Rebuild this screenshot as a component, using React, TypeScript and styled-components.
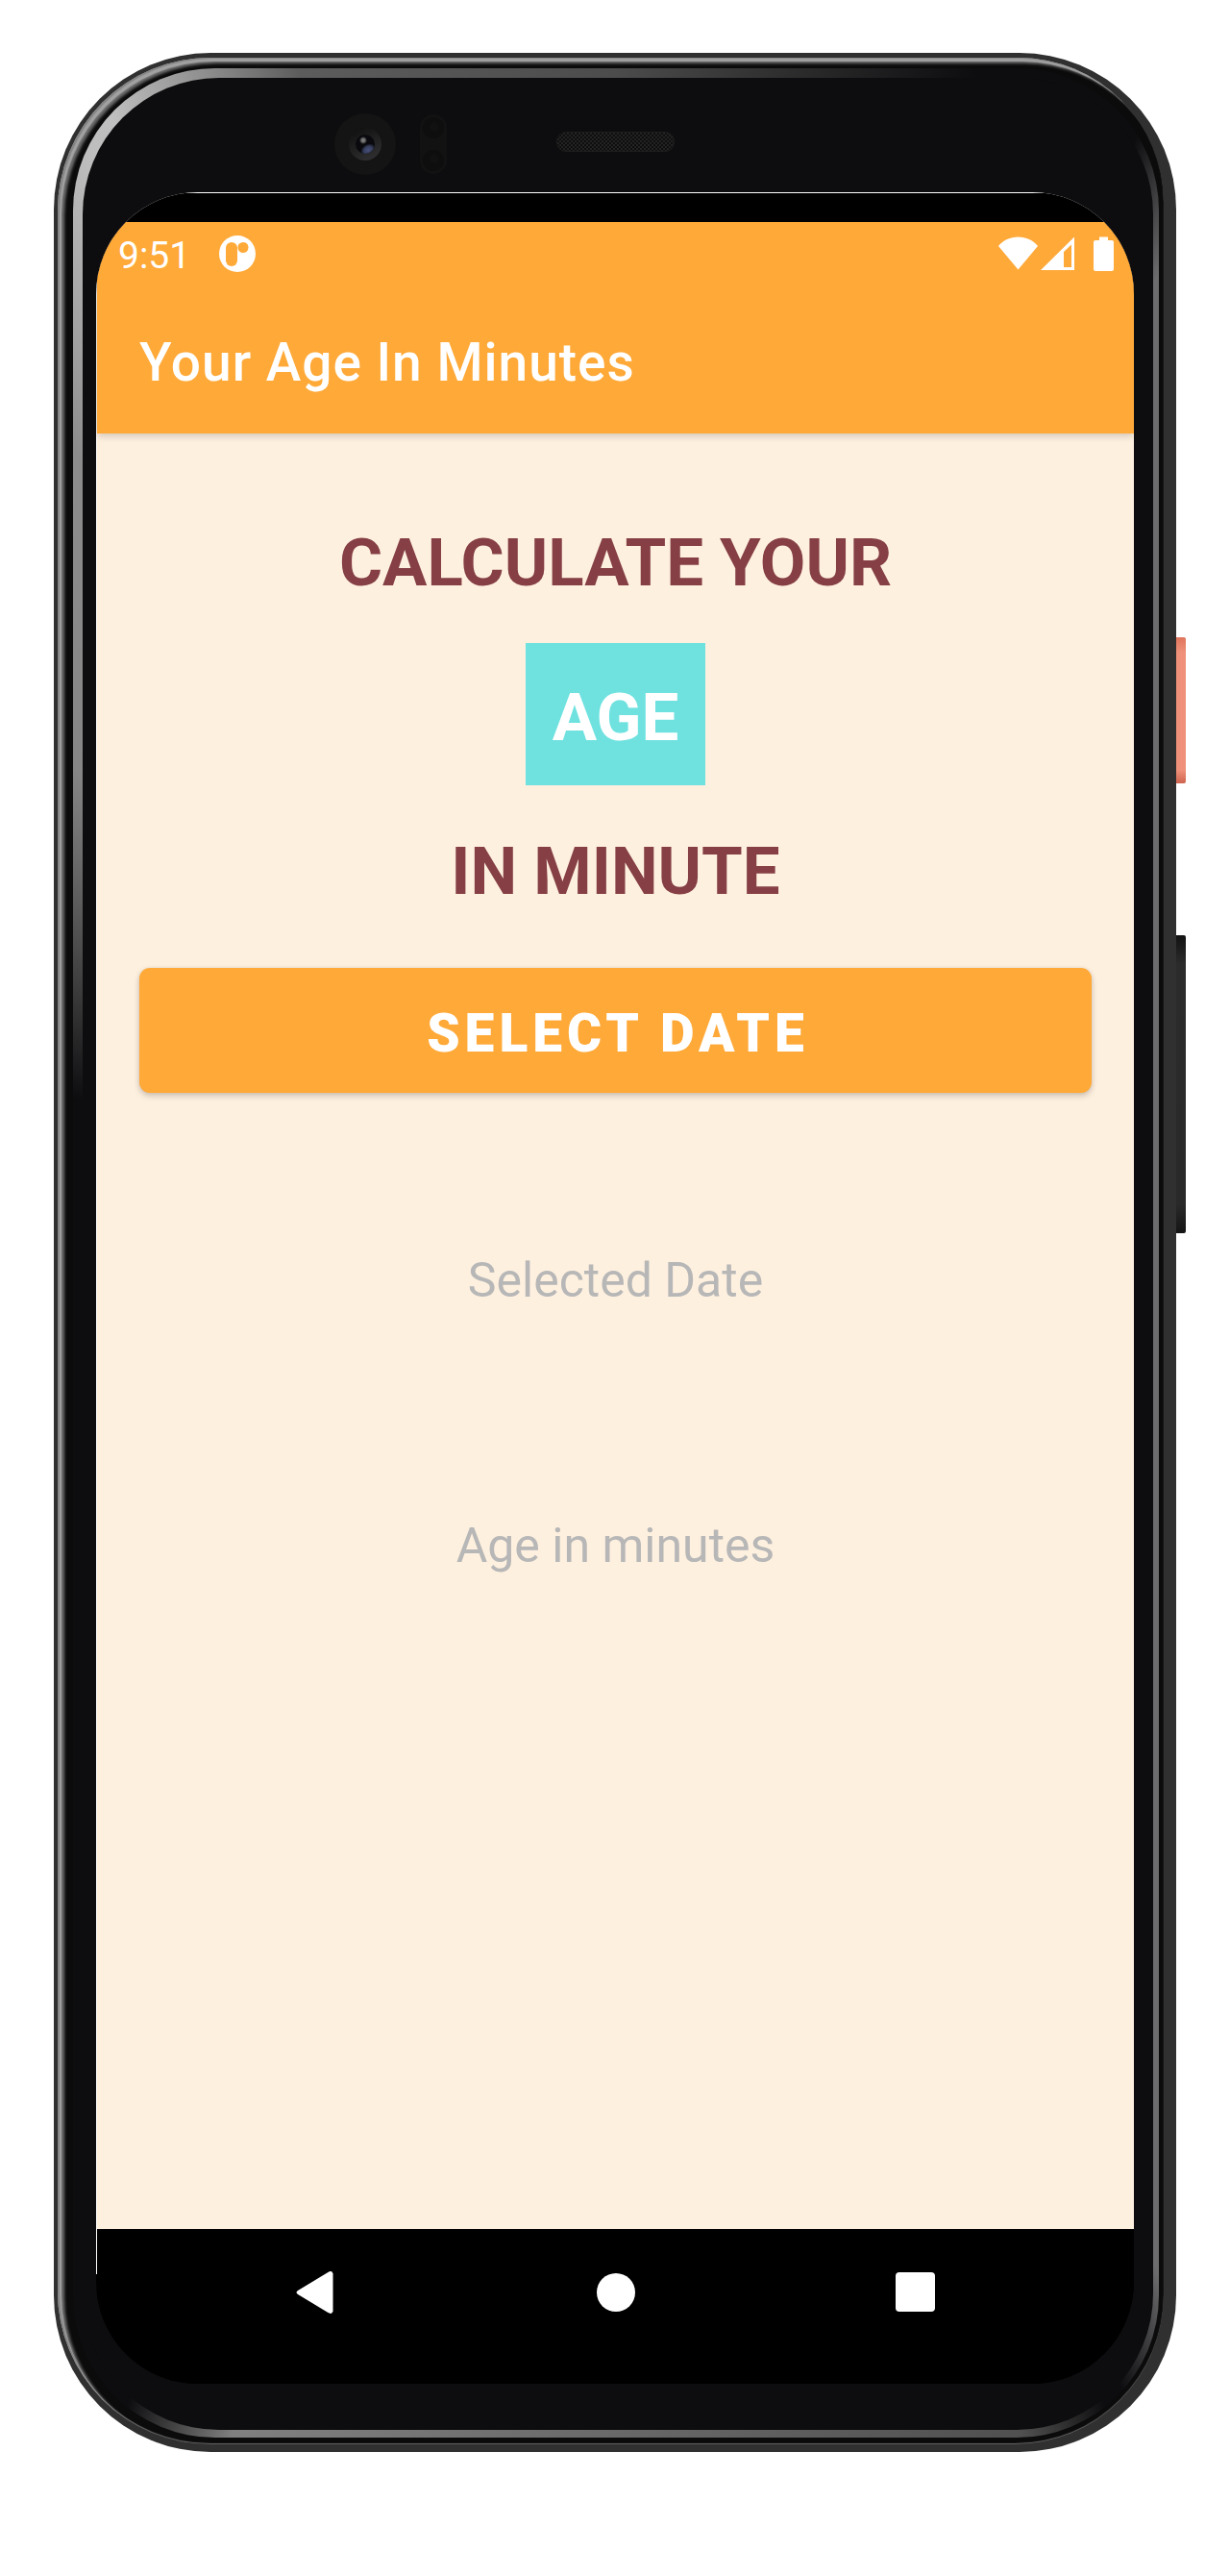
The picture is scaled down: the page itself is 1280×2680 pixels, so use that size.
import React from "react";
import styled, { createGlobalStyle } from "styled-components";

const GlobalStyle = createGlobalStyle`
  *, *::before, *::after { box-sizing: border-box; }
  html, body { margin: 0; padding: 0; background: #fff; }
  body { font-family: Roboto, "Liberation Sans", sans-serif; }
`;

const Page = styled.div`
  display: flex;
  align-items: stretch;
  min-height: 100vh;
  padding: 55px 46px 129px 56px;
`;

/* ---- device body, from the outer shell inwards ---- */

const Shell = styled.div`
  flex: 1;
  min-width: 0;
  display: flex;
  padding: 5px 13px 8px 4px;
  border-radius: 163px;
  background: #303030;
`;

const Rim = styled.div`
  flex: 1;
  min-width: 0;
  display: flex;
  padding: 11px 5px 7px 16px;
  border-radius: 159px 151px 155px 159px;
  background: #0b0b0c;
  box-shadow: inset 2px 1px 1px #848484, inset 4px 4px 1px #a2a2a2,
    inset 7px 6px 3px #6c6c6c, inset 0 -1px 1px #6a6a6a;
`;

const Bevel = styled.div`
  flex: 1;
  min-width: 0;
  display: flex;
  padding: 10px 6px 8px 10px;
  border-radius: 148px;
  background: conic-gradient(
    #4c4c4c 0deg,
    #0d0d0f 17deg,
    #0d0d0f 25deg,
    #6c6c6e 29deg,
    #6c6c6e 152deg,
    #0d0d0f 156deg,
    #0d0d0f 157deg,
    #505050 161deg,
    #808080 198deg,
    #0d0d0f 203deg,
    #0d0d0f 286deg,
    #868686 312deg,
    #8c8c8c 326deg,
    #bcbcbc 334deg,
    #c0c0c0 336deg,
    #8c8c8c 341deg,
    #5c5c5c 345deg,
    #4c4c4c 360deg
  );
`;

const Face = styled.div`
  flex: 1;
  min-width: 0;
  display: flex;
  flex-direction: column;
  padding: 0 20px 48px 14px;
  border-radius: 142px;
  background: #0d0d0f;
`;

const SensorBar = styled.div`
  display: grid;
  grid-template-columns: 1fr auto 1fr;
  align-items: center;
  height: 119px;
`;

const Sensors = styled.div`
  display: flex;
  align-items: center;
  gap: 25px;
  justify-self: end;
  padding-right: 114px;
  padding-top: 18px;
`;

const Speaker = styled.div`
  width: 123px;
  height: 21px;
  margin-top: 14px;
  border-radius: 10px;
  border: 1px solid #1d1d1e;
  background: repeating-conic-gradient(#232324 0 25%, #0e0e0f 0 50%) 0 0 / 4px 4px;
`;

const SideKeys = styled.div`
  display: flex;
  flex-direction: column;
  gap: 158px;
  width: 10px;
  padding-top: 608px;
`;

const PowerKey = styled.div`
  height: 152px;
  border-radius: 0 2px 2px 0;
  background: linear-gradient(#e0745c 0, #ef917a 16px, #ef917a 138px, #cf6450 152px);
`;

const VolumeKey = styled.div`
  height: 310px;
  border-radius: 0 2px 2px 0;
  background: linear-gradient(#121212 0, #2b2b2b 30px, #292929 280px, #151515 310px);
`;

/* ---- screen ---- */

const Glass = styled.div`
  flex: 1;
  display: flex;
  padding: 1px 0 0 1px;
  overflow: hidden;
  border-radius: 106px;
  background: linear-gradient(180deg, #fff 95%, #000 95%);
`;

const Screen = styled.div`
  flex: 1;
  min-width: 0;
  display: flex;
  flex-direction: column;
  padding: 30px 0 29px;
  background: #000;
`;

const TopBar = styled.header`
  position: relative;
  background: #ffa938;
  color: #fff;
  box-shadow: 0 2px 8px rgba(0, 0, 0, 0.2);
`;

const StatusBar = styled.div`
  display: flex;
  align-items: center;
  height: 66px;
  padding: 0 21px 0 22px;
`;

const Clock = styled.time`
  padding-top: 4px;
  margin-right: 30px;
  font-size: 39px;
  line-height: 46px;
`;

const StatusIcons = styled.div`
  display: flex;
  align-items: center;
  margin-left: auto;
`;

const AppTitle = styled.h1`
  margin: 0;
  padding: 48px 44px 42px;
  font-size: 55px;
  line-height: 64px;
  font-weight: 500;
  letter-spacing: 1px;
`;

const Content = styled.main`
  flex: 1;
  display: flex;
  flex-direction: column;
  align-items: center;
  padding: 89px 44px 44px;
  background: #fef0df;
`;

const Headline = styled.h2`
  display: flex;
  flex-direction: column;
  align-items: center;
  margin: 0 0 54px;
  color: #853f45;
  font-size: 69px;
  line-height: 92px;
  font-weight: 700;
  text-align: center;
`;

const Badge = styled.span`
  margin: 37px 0 44px;
  padding: 32px 28px 24px;
  background: #6fe2e0;
  color: #fff;
`;

const SelectButton = styled.button`
  width: 100%;
  height: 130px;
  margin: 0 0 165px;
  padding: 5px 0 0 5px;
  border: 0;
  border-radius: 11px;
  background: #ffa938;
  color: #fff;
  font-family: inherit;
  font-size: 55px;
  line-height: 64px;
  font-weight: 900;
  letter-spacing: 5px;
  box-shadow: 0 3px 6px rgba(0, 0, 0, 0.2), 0 0 4px rgba(0, 0, 0, 0.06);
  cursor: pointer;
`;

const Results = styled.div`
  display: flex;
  flex-direction: column;
  gap: 216px;
`;

const Result = styled.output`
  color: #b7b7b7;
  font-size: 50px;
  line-height: 60px;
  text-align: center;
`;

const NavBar = styled.nav`
  display: flex;
  justify-content: center;
  gap: 180px;
  height: 132px;
`;

const NavButton = styled.button`
  display: flex;
  align-items: center;
  justify-content: center;
  width: 132px;
  padding: 0;
  border: 0;
  background: none;
  color: #fff;
  cursor: pointer;
`;

function Camera() {
  return (
    <svg width="64" height="64" viewBox="0 0 64 64" aria-hidden="true">
      <defs>
        <linearGradient id="lensRing" x1="0.2" y1="0" x2="0.7" y2="1">
          <stop offset="0" stopColor="#101010" />
          <stop offset="1" stopColor="#303032" />
        </linearGradient>
        <radialGradient id="lensGlow">
          <stop offset="0" stopColor="#47507a" />
          <stop offset="0.6" stopColor="#353c5c" />
          <stop offset="1" stopColor="#353c5c" stopOpacity="0" />
        </radialGradient>
        <radialGradient id="lensSpark">
          <stop offset="0" stopColor="#8c8c8c" />
          <stop offset="0.5" stopColor="#666" />
          <stop offset="1" stopColor="#666" stopOpacity="0" />
        </radialGradient>
        <clipPath id="lensClip"><circle cx="32" cy="32" r="10" /></clipPath>
      </defs>
      <circle cx="32" cy="32" r="32" fill="#141414" />
      <circle cx="32" cy="32" r="17" fill="url(#lensRing)" />
      <circle cx="32" cy="32" r="10" fill="#0a0a0e" />
      <g clipPath="url(#lensClip)">
        <ellipse cx="35" cy="38" rx="8" ry="6" transform="rotate(-30 35 38)" fill="url(#lensGlow)" />
      </g>
      <circle cx="30" cy="28" r="4" fill="url(#lensSpark)" />
    </svg>
  );
}

function Proximity() {
  return (
    <svg width="28" height="62" viewBox="0 0 28 62" aria-hidden="true">
      <rect width="28" height="62" rx="14" fill="#121212" />
      <circle cx="14" cy="14" r="11" fill="#0e0e0e" />
      <circle cx="15" cy="13" r="5" fill="#111" />
      <circle cx="14" cy="48" r="11" fill="#0e0e0e" />
      <circle cx="15" cy="46" r="5" fill="#111" />
    </svg>
  );
}

function NotificationIcon() {
  return (
    <svg width="38" height="38" viewBox="0 0 38 38" aria-hidden="true">
      <circle cx="19" cy="19" r="19" fill="#fff" />
      <rect x="7" y="7" width="12" height="25" rx="6" fill="#ffa938" />
      <circle cx="25" cy="12.5" r="5.5" fill="#ffa938" />
    </svg>
  );
}

function SignalIcons() {
  return (
    <svg width="120" height="36" viewBox="0 0 120 36" fill="#fff" role="img" aria-label="Wi-Fi, signal and battery">
      <path d="M0 10C5 4 12 .5 20.500 .5S36 4 41 10L20.500 34.500z" />
      <path fillRule="evenodd" d="M44 35L79 0.500V35zM68 16V32H76V8.500z" />
      <path d="M105 .5h9V4h4a2 2 0 0 1 2 2v28a2 2 0 0 1-2 2h-17a2 2 0 0 1-2-2V6a2 2 0 0 1 2-2h4z" />
    </svg>
  );
}

export default function App() {
  return (
    <>
      <GlobalStyle />
      <Page>
        <Shell>
          <Rim>
            <Bevel>
              <Face>
                <SensorBar>
                  <Sensors>
                    <Camera />
                    <Proximity />
                  </Sensors>
                  <Speaker />
                </SensorBar>
                <Glass>
                  <Screen>
                    <TopBar>
                      <StatusBar>
                        <Clock>9:51</Clock>
                        <NotificationIcon />
                        <StatusIcons>
                          <SignalIcons />
                        </StatusIcons>
                      </StatusBar>
                      <AppTitle>Your Age In Minutes</AppTitle>
                    </TopBar>
                    <Content>
                      <Headline>
                        <span>CALCULATE YOUR</span>
                        <Badge>AGE</Badge>
                        <span>IN MINUTE</span>
                      </Headline>
                      <SelectButton type="button">SELECT DATE</SelectButton>
                      <Results>
                        <Result>Selected Date</Result>
                        <Result>Age in minutes</Result>
                      </Results>
                    </Content>
                    <NavBar>
                      <NavButton type="button" aria-label="Back">
                        <svg width="46" height="46" viewBox="0 0 46 46" fill="currentColor" aria-hidden="true">
                          <path d="M4 21L35 2.200Q39.500 -.5 40.500 3.500V42.500Q39.500 46.500 35 43.800L4 25Q1 23 4 21z" />
                        </svg>
                      </NavButton>
                      <NavButton type="button" aria-label="Home">
                        <svg width="40" height="40" viewBox="0 0 40 40" fill="currentColor" aria-hidden="true">
                          <circle cx="20" cy="20" r="20" />
                        </svg>
                      </NavButton>
                      <NavButton type="button" aria-label="Recent apps">
                        <svg width="42" height="42" viewBox="0 0 42 42" fill="currentColor" aria-hidden="true">
                          <rect width="41" height="41" rx="4" />
                        </svg>
                      </NavButton>
                    </NavBar>
                  </Screen>
                </Glass>
              </Face>
            </Bevel>
          </Rim>
        </Shell>
        <SideKeys aria-hidden="true">
          <PowerKey />
          <VolumeKey />
        </SideKeys>
      </Page>
    </>
  );
}
